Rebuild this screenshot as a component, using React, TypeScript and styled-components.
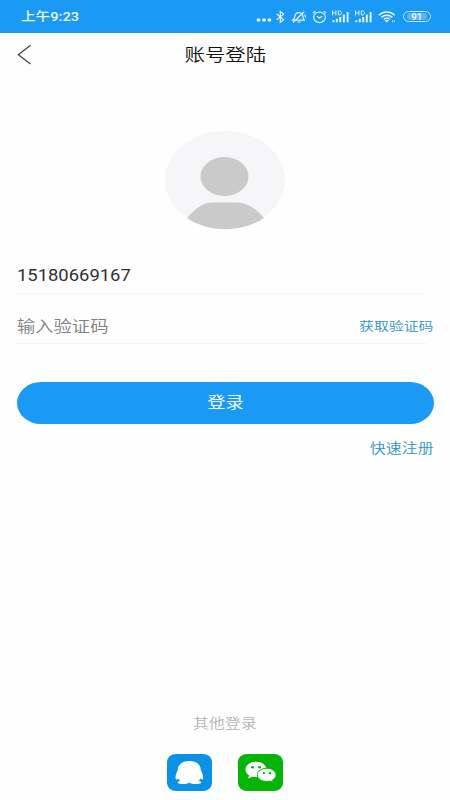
import React from 'react';
import styled, { createGlobalStyle } from 'styled-components';

const GlobalStyle = createGlobalStyle`
  html, body { margin: 0; padding: 0; background: #fefefe; }
  * { box-sizing: border-box; }
`;

const Screen = styled.main`
  width: 450px;
  height: 800px;
  display: flex;
  flex-direction: column;
  background: #fefefe;
  overflow: hidden;
  font-family: Roboto, 'Noto Sans CJK SC', sans-serif;
`;

const WideText = styled.span<{ $size: number; $color: string; $scale?: number; $origin?: string; $weight?: number }>`
  display: block;
  white-space: nowrap;
  font-size: ${p => p.$size}px;
  line-height: 20px;
  font-weight: ${p => p.$weight ?? 400};
  color: ${p => p.$color};
  transform: scaleX(${p => p.$scale ?? 1.19});
  transform-origin: ${p => p.$origin ?? 'center'};
`;

const StatusBar = styled.header`
  height: 33px;
  padding: 0 19px 0 21px;
  display: flex;
  align-items: center;
  justify-content: space-between;
  background: #1a99f5;
`;

const StatusIcons = styled.div`
  display: flex;
  align-items: center;
  color: #e4f5ff;
  svg { display: block; }
`;

const StatusIcon = styled.svg<{ $gap?: number }>`
  flex: none;
  height: 14px;
  margin-left: ${p => p.$gap ?? 0}px;
  fill: none;
  stroke: currentColor;
  stroke-width: 1.2;
`;

const Battery = styled.div`
  width: 28px;
  height: 11px;
  margin-left: 7px;
  padding: 1px 3px;
  border: 1px solid #c9eaff;
  border-radius: 6px;
`;

const Charge = styled.div`
  height: 7px;
  display: flex;
  align-items: center;
  justify-content: center;
  border-radius: 3px;
  background: #58b5f8;
`;

const TitleBar = styled.nav`
  height: 43px;
  padding: 0 17px;
  display: grid;
  grid-template-columns: 16px 1fr 16px;
  align-items: center;
  justify-items: center;
`;

const BackButton = styled.button`
  padding: 0;
  border: 0;
  background: none;
  svg { display: block; }
`;

const AvatarArea = styled.section`
  height: 189px;
  padding-top: 54px;
  display: flex;
  justify-content: center;
`;

const Form = styled.form`
  padding: 0 16px 0 17px;
  display: flex;
  flex-direction: column;
`;

const Field = styled.div<{ $height: number; $top: number }>`
  height: ${p => p.$height}px;
  padding-top: ${p => p.$top}px;
  margin-right: 7px;
  display: flex;
  justify-content: space-between;
  border-bottom: 1px solid #f5f5f5;
`;

const CodeLink = styled.div`
  margin-right: -7px;
`;

const LoginButton = styled.button`
  height: 42px;
  margin-top: 38px;
  padding: 0;
  display: flex;
  align-items: center;
  justify-content: center;
  border: 0;
  border-radius: 24px / 21px;
  background: #1a99f5;
  font-family: inherit;
`;

const RegisterRow = styled.div`
  margin-top: 15px;
  display: flex;
  justify-content: flex-end;
`;

const OtherLogin = styled.footer`
  margin-top: auto;
  padding-bottom: 9px;
  display: flex;
  flex-direction: column;
  align-items: center;
`;

const Providers = styled.div`
  margin-top: 20px;
  display: flex;
  gap: 26px;
  svg { display: block; }
`;

const HdSignal = ({ gap }: { gap: number }) => (
  <StatusIcon $gap={gap} width="18" viewBox="0 0 18 14">
    <path d="M1.5 .4v5M4.9 .4v5M1.5 2.9H4.9M7.3 .9v4h1.2c2.6 0 2.6-4 0-4z" strokeWidth="1" />
    <path d="M2.4 12.2V10.2M5.8 12.2V8.7M9.2 12.2V7M12.8 12.2V4.4M16.6 12.2V2" strokeWidth="2" />
  </StatusIcon>
);

const PhoneStatus = () => (
  <StatusBar>
    <WideText $size={12.4} $color="#eaf8ff" $scale={1.18} $origin="left" $weight={500}>上午9:23</WideText>
    <StatusIcons>
      <StatusIcon width="16" viewBox="0 0 16 14">
        <g fill="currentColor" stroke="none">
          <ellipse cx="2.5" cy="10" rx="2" ry="1.7" />
          <ellipse cx="8" cy="10" rx="2" ry="1.7" />
          <ellipse cx="13.4" cy="10" rx="2" ry="1.7" />
        </g>
      </StatusIcon>
      <StatusIcon $gap={4} width="9" viewBox="0 0 9 14">
        <path d="M.7 4l7 5.8-3.4 2.5V1.5l3.4 2.6L.7 9.8" />
      </StatusIcon>
      <StatusIcon $gap={6} width="16" viewBox="0 0 16 14">
        <path d="M1.5 10.2l2-2.3c.3-3.4 1.6-5.2 4.4-5.2 3 0 4.3 1.8 4.1 5l1.5 2.5zM6.5 12h3.2M2 12.5L13.2 1.8M13.7 4.5c.7.9.9 2 .7 3" />
      </StatusIcon>
      <StatusIcon $gap={5} width="15" viewBox="0 0 15 14">
        <ellipse cx="7.5" cy="7.3" rx="5.9" ry="5.2" />
        <path d="M.8 3.3l2.6-2M14.2 3.3l-2.6-2M4.8 6.3L7.5 8l2.7-1.7" />
      </StatusIcon>
      <HdSignal gap={4} />
      <HdSignal gap={5} />
      <StatusIcon $gap={6} width="18" viewBox="0 0 18 14">
        <path d="M.8 5.2c4.5-4.3 11.5-4.3 16 0M3.3 7.4c3.1-2.9 8-2.9 11 0M5.8 9.4c1.8-1.6 4.4-1.6 6.1 0" strokeWidth="1.5" />
        <path d="M6.8 10.5c1.1-1 3-1 4.1 0l-2 2z" fill="currentColor" stroke="none" />
        <path d="M14.5 10v2.5M16.3 10v2.5" strokeWidth=".7" />
      </StatusIcon>
      <Battery><Charge><WideText $size={8.5} $color="#fff" $scale={1.15} $weight={500}>91</WideText></Charge></Battery>
    </StatusIcons>
  </StatusBar>
);

const Avatar = () => (
  <svg width="122" height="101" viewBox="0 0 122 101">
    <ellipse cx="61" cy="50" rx="60" ry="49" fill="#f6f6f8" />
    <ellipse cx="60.5" cy="46.5" rx="24" ry="19.5" fill="#cacaca" />
    <path d="M23 88C30 80 38 72.5 49 72.5H73C84 72.5 93 80 100 88C78 103 45 103 23 88Z" fill="#cacaca" />
  </svg>
);

const QqIcon = () => (
  <svg width="45" height="37" viewBox="0 0 45 37">
    <rect width="45" height="37" rx="9" ry="8" fill="#0b91e6" />
    <path
      d="M22.2 7C14.8 7 10.6 11 10.7 16.3C9.2 19.2 8.2 22.5 8.6 24.6C8.9 26.2 10.2 25.6 11.3 24.5C11.7 25.3 12.4 26.1 13.4 26.8C10.8 27.4 9.8 28.8 11.8 29.5C14.8 30.4 20.2 30.1 22.4 28.8C24.7 30.1 30 30.4 33.2 29.5C35.2 28.8 34 27.3 31.4 26.8C32.4 26.1 33.1 25.3 33.5 24.5C34.7 25.7 35.9 26 36.1 24.6C36.5 22.4 35.4 19.2 33.8 16.3C33.9 10.8 29.6 7 22.2 7Z"
      fill="#fff"
    />
  </svg>
);

const WeChatIcon = () => (
  <svg width="45" height="37" viewBox="0 0 45 37">
    <rect width="45" height="37" rx="9" ry="8" fill="#05b505" />
    <path d="M18 7.8C12 7.8 7.5 11.2 7.5 15.6c0 2.5 1.4 4.5 3.7 6l-1.1 3 4.2-1.9c1.2.3 2.5.5 3.8.5C24 23.2 28.5 20 28.5 15.6S24 7.8 18 7.8z" fill="#fff" />
    <path d="M28.8 14.3c-5.3 0-9.5 2.9-9.5 6.6s4.2 6.6 9.5 6.6c1.2 0 2.3-.2 3.3-.5l3.3 1.6-.9-2.7c2.3-1.2 3.6-3 3.6-5 0-3.7-4.1-6.6-9.3-6.6z" fill="#fff" stroke="#05b505" strokeWidth="1" />
    <g fill="#05b505">
      <ellipse cx="14.5" cy="13.2" rx="1.5" ry="1.3" /><ellipse cx="21.5" cy="13.2" rx="1.5" ry="1.3" />
      <ellipse cx="25.8" cy="19.2" rx="1.3" ry="1.1" /><ellipse cx="32" cy="19.2" rx="1.3" ry="1.1" />
    </g>
  </svg>
);

export default function App() {
  return (
    <>
      <GlobalStyle />
      <Screen>
        <PhoneStatus />
        <TitleBar>
          <BackButton aria-label="返回">
            <svg width="16" height="22" viewBox="0 0 16 22" fill="none" stroke="#444" strokeWidth="1.3">
              <path d="M13.5 1.3L1.3 10.8L13.5 20" />
            </svg>
          </BackButton>
          <WideText $size={17.2} $color="#111" $weight={350}>账号登陆</WideText>
        </TitleBar>
        <AvatarArea><Avatar /></AvatarArea>
        <Form onSubmit={e => e.preventDefault()}>
          <Field $height={29} $top={1}>
            <WideText $size={16} $color="#303030" $scale={1.15} $origin="left">15180669167</WideText>
          </Field>
          <Field $height={50} $top={23}>
            <WideText $size={15.5} $color="#808080" $scale={1.18} $origin="left" $weight={350}>输入验证码</WideText>
            <CodeLink>
              <WideText $size={12.5} $color="#2f93c9" $origin="right" $weight={350}>获取验证码</WideText>
            </CodeLink>
          </Field>
          <LoginButton>
            <WideText $size={15.5} $color="#effaff" $scale={1.18}>登录</WideText>
          </LoginButton>
          <RegisterRow>
            <WideText $size={13.4} $color="#2f93c9" $origin="right" $weight={350}>快速注册</WideText>
          </RegisterRow>
        </Form>
        <OtherLogin>
          <WideText $size={13.4} $color="#b4b4b4" $weight={350}>其他登录</WideText>
          <Providers><QqIcon /><WeChatIcon /></Providers>
        </OtherLogin>
      </Screen>
    </>
  );
}
